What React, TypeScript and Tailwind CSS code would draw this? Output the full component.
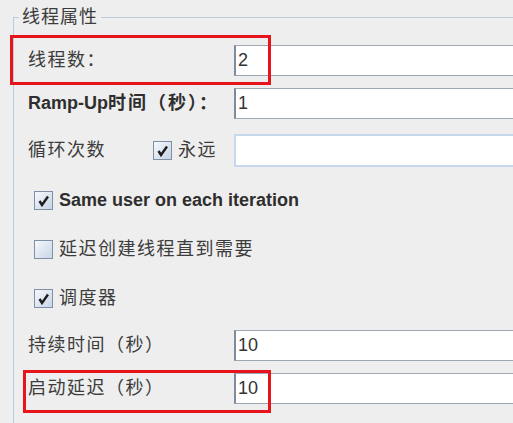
import React from "react";

const FONT = { fontFamily: '"Liberation Sans", "Noto Sans CJK SC", sans-serif' };

function Check({ checked }: { checked: boolean }) {
  return (
    <span className="w-[19px] h-[19px] shrink-0 border border-[#7f90a6] bg-gradient-to-br from-[#f6f9fc] to-[#c7d5e6] flex items-center justify-center">
      {checked && (
        <svg width="13" height="13" viewBox="0 0 13 13">
          <path d="M2.5 7 L5 11 L11 2.5" fill="none" stroke="#1e1e1e" strokeWidth="2.4" strokeLinejoin="miter" />
        </svg>
      )}
    </span>
  );
}

function Field({ value, disabled = false }: { value?: string; disabled?: boolean }) {
  return (
    <div
      className={
        disabled
          ? "flex-1 h-[33px] bg-white border-2 border-[#c6d8ec]"
          : "flex-1 h-[31px] bg-white border border-[#9ea8b5] border-l-[#7f8b9b] border-l-2 flex items-center pl-[2px] text-[18px] text-[#333]"
      }
    >
      {value}
    </div>
  );
}

function Row({ label, value, className = "" }: { label: React.ReactNode; value: string; className?: string }) {
  return (
    <div className={`flex items-center ${className}`}>
      <div className="w-[206px] shrink-0 text-[18px] tracking-[1.5px] text-[#3c3c3c]">{label}</div>
      <Field value={value} />
    </div>
  );
}

function CheckRow({ label, checked, bold = false, className = "" }: { label: string; checked: boolean; bold?: boolean; className?: string }) {
  return (
    <div className={`flex items-center gap-[6px] pl-[6px] h-[19px] ${className}`}>
      <Check checked={checked} />
      <span className={`text-[18px] ${bold ? "font-bold text-[#2e2e2e]" : "tracking-[1.5px] text-[#3c3c3c]"}`}>{label}</span>
    </div>
  );
}

export default function App() {
  return (
    <div className="relative w-[513px] h-[423px] overflow-hidden bg-[#eeeeee]" style={FONT}>
      <div className="pt-[17px] pl-[13px]">
        <div className="w-[560px] h-[420px] border-l border-t border-[#bccbdc] pl-[14px] pt-[27px]">
          <Row label="线程数：" value="2" />
          <div className="flex items-center mt-[12px]">
            <div className="w-[206px] shrink-0 text-[18px] font-bold text-[#2e2e2e]">
              Ramp-Up<span className="tracking-[2px]">时间（秒）：</span>
            </div>
            <Field value="1" />
          </div>
          <div className="flex items-center mt-[15px]">
            <div className="w-[125px] shrink-0 text-[18px] tracking-[1.5px] text-[#3c3c3c]">循环次数</div>
            <div className="w-[81px] shrink-0 flex items-center gap-[6px]">
              <Check checked />
              <span className="text-[18px] tracking-[1.5px] text-[#3c3c3c]">永远</span>
            </div>
            <Field disabled />
          </div>
          <CheckRow className="mt-[24px]" checked bold label="Same user on each iteration" />
          <CheckRow className="mt-[30px]" checked={false} label="延迟创建线程直到需要" />
          <CheckRow className="mt-[30px]" checked label="调度器" />
          <Row className="mt-[22px]" label="持续时间（秒）" value="10" />
          <Row className="mt-[12px]" label="启动延迟（秒）" value="10" />
        </div>
      </div>

      {/* fieldset title */}
      <span className="absolute left-[19px] top-[6px] px-[3px] bg-[#eeeeee] text-[18px] tracking-[1px] text-[#3c3c3c] leading-[22px]">线程属性</span>

      {/* red annotation boxes */}
      <div className="absolute left-[10px] top-[35px] w-[261px] h-[50px] border-[3px] border-[#e8141c]" />
      <div className="absolute left-[23px] top-[370px] w-[248px] h-[43px] border-[3px] border-[#e8141c]" />
    </div>
  );
}
